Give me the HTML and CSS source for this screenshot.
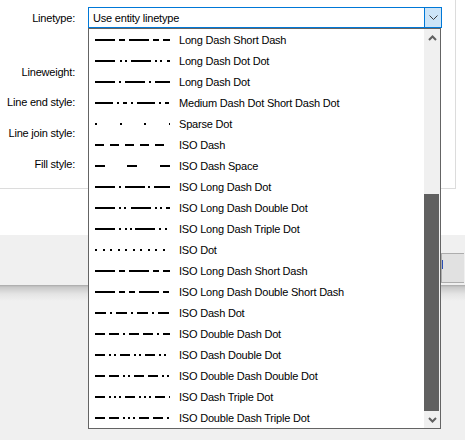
FILE: index.html
```html
<!DOCTYPE html>
<html>
<head>
<meta charset="utf-8">
<link rel="stylesheet" href="styles.css">
</head>
<body>
<div class="dialog">
  <div class="panel">
    <div class="row row-type">
      <div class="label">Linetype:</div>
      <div class="combo">
        <span class="combo-text">Use entity linetype</span>
        <span class="combo-btn">
          <svg width="9" height="5" viewBox="0 0 9 5"><path d="M0.5 0.5 L4.5 4.5 L8.5 0.5" fill="none" stroke="#3a3a3a" stroke-width="1"/></svg>
        </span>
      </div>
    </div>
    <div class="row row-weight"><div class="label">Lineweight:</div></div>
    <div class="row row-end"><div class="label">Line end style:</div></div>
    <div class="row row-join"><div class="label">Line join style:</div></div>
    <div class="row row-fill"><div class="label">Fill style:</div></div>
  </div>
</div>
<div class="footer">
  <div class="button"><span class="focus-mark"></span></div>
</div>
<div class="desktop"></div>

<div class="popup">
  <ul class="list">
    <li><svg width="75" height="2"><line x1="0" y1="1" x2="75" y2="1" stroke-dasharray="20 4 6 4"/></svg><span>Long Dash Short Dash</span></li>
    <li><svg width="75" height="2"><line x1="0" y1="1" x2="75" y2="1" stroke-dasharray="20 4.5 2 3 2 4.3"/></svg><span>Long Dash Dot Dot</span></li>
    <li><svg width="75" height="2"><line x1="0" y1="1" x2="75" y2="1" stroke-dasharray="20 4 2 4"/></svg><span>Long Dash Dot</span></li>
    <li><svg width="75" height="2"><line x1="0" y1="1" x2="75" y2="1" stroke-dasharray="18 4 2 4 4 4 2 4"/></svg><span>Medium Dash Dot Short Dash Dot</span></li>
    <li><svg width="75" height="2"><line x1="0" y1="1" x2="75" y2="1" stroke-dasharray="2 22.5"/></svg><span>Sparse Dot</span></li>
    <li><svg width="75" height="2"><line x1="0" y1="1" x2="75" y2="1" stroke-dasharray="9 6"/></svg><span>ISO Dash</span></li>
    <li><svg width="75" height="2"><line x1="0" y1="1" x2="75" y2="1" stroke-dasharray="10 22.3"/></svg><span>ISO Dash Space</span></li>
    <li><svg width="75" height="2"><line x1="0" y1="1" x2="75" y2="1" stroke-dasharray="20 3.7 2 4"/></svg><span>ISO Long Dash Dot</span></li>
    <li><svg width="75" height="2"><line x1="0" y1="1" x2="75" y2="1" stroke-dasharray="20 4 2 3 2 4.7"/></svg><span>ISO Long Dash Double Dot</span></li>
    <li><svg width="75" height="2"><line x1="0" y1="1" x2="75" y2="1" stroke-dasharray="20 4 2 3.7 2 3.7 2 2.6"/></svg><span>ISO Long Dash Triple Dot</span></li>
    <li><svg width="75" height="2"><line x1="0" y1="1" x2="75" y2="1" stroke-dasharray="2 5.5"/></svg><span>ISO Dot</span></li>
    <li><svg width="75" height="2"><line x1="0" y1="1" x2="75" y2="1" stroke-dasharray="20 4 6 4"/></svg><span>ISO Long Dash Short Dash</span></li>
    <li><svg width="75" height="2"><line x1="0" y1="1" x2="75" y2="1" stroke-dasharray="20 4 6 4 6 4"/></svg><span>ISO Long Dash Double Short Dash</span></li>
    <li><svg width="75" height="2"><line x1="0" y1="1" x2="75" y2="1" stroke-dasharray="11 4 2 4"/></svg><span>ISO Dash Dot</span></li>
    <li><svg width="75" height="2"><line x1="0" y1="1" x2="75" y2="1" stroke-dasharray="10 4 10 4 2 4"/></svg><span>ISO Double Dash Dot</span></li>
    <li><svg width="75" height="2"><line x1="0" y1="1" x2="75" y2="1" stroke-dasharray="10 4 2 3 2 4"/></svg><span>ISO Dash Double Dot</span></li>
    <li><svg width="75" height="2"><line x1="0" y1="1" x2="75" y2="1" stroke-dasharray="10 4 10 4 2 3 2 4"/></svg><span>ISO Double Dash Double Dot</span></li>
    <li><svg width="75" height="2"><line x1="0" y1="1" x2="75" y2="1" stroke-dasharray="10 4 2 3 2 3 2 4"/></svg><span>ISO Dash Triple Dot</span></li>
    <li><svg width="75" height="2"><line x1="0" y1="1" x2="75" y2="1" stroke-dasharray="10 4 10 4 2 3 2 3 2 4"/></svg><span>ISO Double Dash Triple Dot</span></li>
  </ul>
  <div class="scrollbar">
    <div class="arrow arrow-up">
      <svg width="9" height="6" viewBox="0 0 9 6"><path d="M1 5 L4.5 1.5 L8 5" fill="none" stroke="#606060" stroke-width="2"/></svg>
    </div>
    <div class="track"><div class="thumb"></div></div>
    <div class="arrow arrow-down">
      <svg width="9" height="6" viewBox="0 0 9 6"><path d="M1 1 L4.5 4.5 L8 1" fill="none" stroke="#606060" stroke-width="2"/></svg>
    </div>
  </div>
</div>
</body>
</html>
```

FILE: styles.css
```css
html, body {
  margin: 0;
  padding: 0;
}
body {
  width: 465px;
  height: 440px;
  overflow: hidden;
  position: relative;
  font-family: "Liberation Sans", Arial, sans-serif;
  font-size: 11px;
  letter-spacing: -0.2px;
  color: #000;
  background: #f0f0f0;
}
.dialog {
  height: 235px;
  background: #fff;
}
.panel {
  box-sizing: border-box;
  width: 456px;
  height: 189px;
  border-right: 1px solid #dcdcdc;
  border-bottom: 1px solid #dcdcdc;
  padding-top: 7px;
}
.row {
  display: flex;
  align-items: center;
  height: 20px;
}
.label {
  width: 75px;
  text-align: right;
  white-space: nowrap;
  flex: none;
}
.row-type { height: 21px; }
.row-weight { margin-top: 34px; }
.row-end { margin-top: 10px; }
.row-join { margin-top: 11px; }
.row-fill { margin-top: 11px; }

.combo {
  box-sizing: border-box;
  margin-left: 13px;
  width: 354px;
  height: 21px;
  border: 1px solid #0078d7;
  display: flex;
  align-items: center;
  background: #fff;
}
.combo-text {
  flex: 1;
  padding-left: 4px;
}
.combo-btn {
  box-sizing: border-box;
  width: 17px;
  height: 19px;
  background: #cce4f7;
  border-left: 1px solid #0078d7;
  display: flex;
  align-items: center;
  justify-content: center;
}

.footer {
  height: 50px;
  background: #f0f0f0;
  display: flex;
  justify-content: flex-end;
  align-items: flex-start;
}
.button {
  box-sizing: border-box;
  margin-top: 18px;
  margin-right: 1px;
  width: 23px;
  height: 30px;
  background: #e1e1e1;
  border: 1px solid #adadad;
  border-right: none;
  position: relative;
}
.focus-mark {
  position: absolute;
  left: 0;
  top: 6px;
  width: 1px;
  height: 9px;
  background: #2a4fb5;
}
.desktop {
  height: 155px;
  background: linear-gradient(#a8a8a8 0px, #c8c8c8 2px, #e4e4e4 9px, #f0f0f0 16px);
}

.popup {
  position: absolute;
  left: 88px;
  top: 28px;
  box-sizing: border-box;
  width: 353px;
  height: 401px;
  border: 1px solid #646464;
  background: #fff;
  display: flex;
}
.list {
  list-style: none;
  margin: 0;
  padding: 0;
  flex: 1;
}
.list li {
  height: 21px;
  display: flex;
  align-items: center;
  white-space: nowrap;
}
.list svg {
  margin-left: 6px;
  margin-right: 9px;
  flex: none;
  shape-rendering: crispEdges;
}
.list line {
  stroke: #000;
  stroke-width: 2;
}
.scrollbar {
  width: 16px;
  background: #f0f0f0;
  display: flex;
  flex-direction: column;
}
.arrow {
  height: 17px;
  display: flex;
  align-items: center;
  justify-content: center;
  flex: none;
}
.track {
  flex: 1;
  display: flex;
  flex-direction: column;
  justify-content: flex-end;
}
.thumb {
  height: 217px;
  margin: 0 1px 0 0;
  background: #606060;
}
```
